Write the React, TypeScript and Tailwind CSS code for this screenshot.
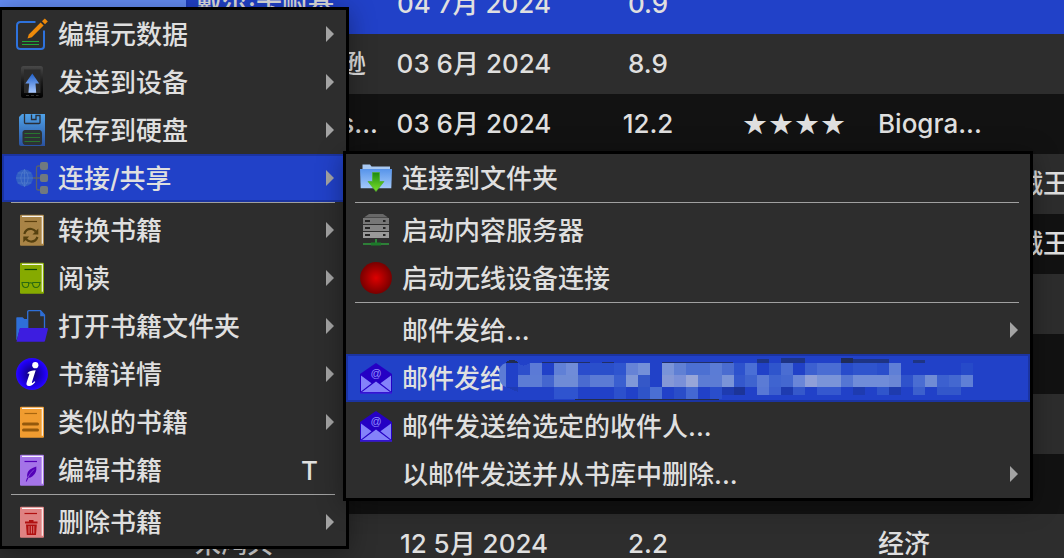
import React from "react";

type IconProps = { children: React.ReactNode };

const Icon = ({ children }: IconProps) => (
  <svg viewBox="0 0 32 32" className="size-8 shrink-0" aria-hidden="true">
    {children}
  </svg>
);

const EditIcon = () => (
  <Icon>
    <path d="M19.5 4H4.5Q1 4 1 7.500V27.500Q1 31 4.500 31H25Q28 31 28 28V12.500" fill="none" stroke="#2e72dc" strokeWidth="2" />
    <path d="M6 23.500H23M6 26.500H23" stroke="#1fa83a" strokeWidth="1" />
    <path d="M11.500 20.500L12.800 16.400L24.600 4.600L27.600 7.600L15.800 19.200Z" fill="#ee8a0a" />
    <path d="M26 3.200L28.800 0.400L31.800 3.400L29 6.200Z" fill="#ee8a0a" />
  </Icon>
);

const DeviceIcon = () => (
  <Icon>
    <defs>
      <linearGradient id="dev-body" x2="0" y2="1">
        <stop stopColor="#484848" />
        <stop offset="0.5" stopColor="#1a1a1a" />
        <stop offset="1" stopColor="#000" />
      </linearGradient>
      <linearGradient id="dev-arrow" x2="0" y2="1">
        <stop stopColor="#1f5fc8" />
        <stop offset="1" stopColor="#a8c8ff" />
      </linearGradient>
    </defs>
    <rect x="5" y="0" width="22" height="32" rx="2.500" fill="url(#dev-body)" />
    <rect x="8" y="3.500" width="16.500" height="23.500" fill="#2b2b2b" />
    <path d="M16.300 7.500L23.200 17.500H19.500L20.200 26.700H12.400L13.200 17.500H9.300Z" fill="url(#dev-arrow)" />
    <path d="M10 29.500H13M15 29.500H18M20 29.500H22.500" stroke="#444" strokeWidth="0.800" />
  </Icon>
);

const SaveIcon = () => (
  <Icon>
    <defs>
      <linearGradient id="disk" x2="0" y2="1">
        <stop stopColor="#4fa2e8" />
        <stop offset="1" stopColor="#2a52a0" />
      </linearGradient>
    </defs>
    <path d="M6 0H29V32H5Q3 32 3 30V3Z" fill="url(#disk)" />
    <path d="M8.500 0V8.500Q8.500 9.500 9.500 9.500H23Q24 9.500 24 8.500V1.500H20V5.500H15.500V0.500" fill="none" stroke="#2a2f38" strokeWidth="1.300" />
    <path d="M8.500 16H24Q26 17 26 19V29Q26 31 24 31H8.500Q6.500 30 6.500 28V18Q7 16.500 8.500 16Z" fill="#2d3234" />
    <path d="M8.500 19.500H24M8.500 23.500H24M8.500 27.500H24" stroke="#28752f" strokeWidth="1" />
  </Icon>
);

const ShareIcon = () => (
  <Icon>
    <path d="M17 16H25M25 4H22Q20.500 4 20.500 6V26Q20.500 28 22 28H25" fill="none" stroke="#59616c" strokeWidth="1.300" />
    <circle cx="8.500" cy="16" r="8.500" fill="#315fc4" />
    <path d="M0 16H17M1.500 11H15.500M1.500 21H15.500M8.500 7.500V24.500M8.500 7.500Q1 16 8.500 24.500M8.500 7.500Q16 16 8.500 24.500" fill="none" stroke="#5580cc" strokeWidth="0.600" />
    <rect x="24" y="0" width="8" height="8" rx="2" fill="#707980" />
    <rect x="24" y="12" width="8" height="8" rx="2" fill="#707980" />
    <rect x="24" y="24" width="8" height="8" rx="2" fill="#707980" />
  </Icon>
);

type BookProps = { fill: string; ink: string; children: React.ReactNode };

const Book = ({ fill, ink, children }: BookProps) => (
  <Icon>
    <rect x="4" y="0.800" width="24" height="31" rx="1" fill={fill} />
    <path d="M6 2.300H26.300V29.800" fill="none" stroke="#fff" strokeOpacity="0.900" strokeWidth="1.200" />
    <path d="M8.500 7.500H21" stroke={ink} strokeWidth="1.200" />
    {children}
  </Icon>
);

const ConvertIcon = () => (
  <Book fill="#a98446" ink="#5c400e">
    <path d="M8.300 20Q10 14.500 15.500 15Q18 15.300 19.800 17.500M21.500 23Q19.500 28 14.500 27.500Q12 27.200 10 25" fill="none" stroke="#55400f" strokeWidth="2.200" />
    <path d="M22.300 14.500V20.500H16.500ZM7.300 28.500V22.500H13.200Z" fill="#55400f" />
  </Book>
);

const ReadIcon = () => (
  <Book fill="#86aa00" ink="#0f4a05">
    <path d="M5.500 20.500H12.500Q13.300 25.500 9.700 25.500Q6.300 25.500 6 20.500M16.500 20.500H24Q23.500 25.500 20 25.500Q16.500 25.500 16.500 20.500M12.500 21.500Q14.500 20 16.500 21.500" fill="none" stroke="#2a6a10" strokeWidth="1.100" />
  </Book>
);

const SimilarIcon = () => (
  <Book fill="#f09c30" ink="#a8660f">
    <path d="M7.500 18H21.500M7.500 24H21.500" stroke="#93590c" strokeWidth="3" strokeLinecap="round" />
  </Book>
);

const FeatherIcon = () => (
  <Book fill="#a474e8" ink="#5400b8">
    <path d="M20.300 12.500Q21 19 16.500 22.300Q14 24 12.500 23.800L10.500 27.800L9.800 27.500L11.300 23Q10.500 18 14 15.500Q17 13.500 20.300 12.500Z" fill="#5400b8" />
    <path d="M11.500 24Q14 19 18 15.500" fill="none" stroke="#a474e8" strokeWidth="0.600" />
  </Book>
);

const DeleteIcon = () => (
  <Book fill="#df8282" ink="#b01010">
    <path d="M9 15.500H21.500V17.500H9ZM13 15.500V14H17.500V15.500" fill="#b01010" />
    <path d="M10 18.500H20.800L20 29H10.800Z" fill="#b01010" />
    <path d="M13 20V27.500M15.400 20V27.500M17.800 20V27.500" stroke="#df8282" strokeWidth="0.900" />
  </Book>
);

const OpenFolderIcon = () => (
  <Icon>
    <path d="M0.300 8Q0.300 7.300 1 7.300H6.500L8.500 9H11.500V18.500H4L0.800 30Q0.300 30 0.300 29Z" fill="#2e6fd8" />
    <path d="M11.700 18V2Q11.700 0.700 13 0.700H24.500L28.500 5V18" fill="none" stroke="#2e6fd8" strokeWidth="1.300" />
    <path d="M24.200 0.500V6.200H29Z" fill="#2e6fd8" />
    <path d="M5 18H31Q32.200 18 31.900 19.200L29 31Q28.700 31.800 28 31.800H0.500L3.500 19Q3.800 18 5 18Z" fill="#3d1de0" />
  </Icon>
);

const InfoIcon = () => (
  <Icon>
    <defs>
      <radialGradient id="info">
        <stop stopColor="#0c0068" />
        <stop offset="0.850" stopColor="#2000f4" />
        <stop offset="1" stopColor="#2a08ff" />
      </radialGradient>
    </defs>
    <circle cx="16" cy="16" r="16" fill="url(#info)" />
    <circle cx="19.300" cy="7.200" r="3.100" fill="#fff" />
    <path d="M11.500 15Q14 12.500 19.700 12.300L16 24Q15.600 25.700 16.800 24.800L18.500 23.200L19.300 24Q16 28.200 13 28Q9.500 27.800 10.800 24L13.500 15.800Q13.200 15.300 11.800 15.800Z" fill="#fff" />
  </Icon>
);

const DownloadFolderIcon = () => (
  <Icon>
    <defs>
      <linearGradient id="fold" x2="0" y2="1">
        <stop stopColor="#5794ea" />
        <stop offset="1" stopColor="#a3c9fa" />
      </linearGradient>
      <linearGradient id="down" x2="0" y2="1">
        <stop stopColor="#1c8a10" />
        <stop offset="1" stopColor="#7be02a" />
      </linearGradient>
    </defs>
    <path d="M2.500 2.500H10L11.500 4.500H30V9H2.500Z" fill="#a9c9f2" />
    <path d="M0 7H32L31.300 26.300H0.700Z" fill="url(#fold)" />
    <path d="M12.500 10.500H19.500V19.500H24L16 29.500L8 19.500H12.500Z" fill="url(#down)" stroke="#4fae2c" strokeWidth="0.700" />
  </Icon>
);

const ServerIcon = () => (
  <Icon>
    <path d="M9 0H23L28 3.500H4Z" fill="#686868" />
    <path d="M3 4H29V10H3Z" fill="#777" />
    <path d="M3 11H29V17H3Z" fill="#858585" />
    <path d="M3 18H29V24H3Z" fill="#999" />
    <path d="M5 7H10M5 14H10M5 21H10M23 7H25.500M23 14H25.500M23 21H25.500" stroke="#252525" strokeWidth="2" />
    <path d="M3 30H29M16 25V29" stroke="#2f9a3d" strokeWidth="1.600" />
    <path d="M11 28.500H21V31.500H11Z" fill="#1d7a2a" />
  </Icon>
);

const RecordIcon = () => (
  <Icon>
    <defs>
      <radialGradient id="rec">
        <stop stopColor="#de0000" />
        <stop offset="1" stopColor="#780000" />
      </radialGradient>
    </defs>
    <circle cx="16" cy="16" r="15.900" fill="url(#rec)" />
  </Icon>
);

const MailIcon = () => (
  <Icon>
    <path d="M16 1L32 12V31H0V12Z" fill="#2500c4" />
    <path d="M1 13.500L11.500 21.300L1 29.500ZM31 13.500L20.500 21.300L31 29.500ZM2 30L16 19.500L30 30Z" fill="#8482fa" />
    <path d="M0 31H32" stroke="#3a1ad8" strokeWidth="1.500" />
    <text x="16" y="14.500" textAnchor="middle" fontSize="11" fontWeight="400" fontFamily="Liberation Sans, sans-serif" fill="#8f8dff">@</text>
  </Icon>
);

const Arrow = () => (
  <svg viewBox="0 0 8 16" className="h-4 w-2 shrink-0" aria-hidden="true">
    <path d="M0 0L8 8L0 16Z" fill="#a3a3a3" />
  </svg>
);

const B = "#2141c8";

const upper = [
  B, "#2d4fcc", "#5b7ad6", B, "#6080d6", "#708cd8", "#2a4ccc", "#2a4fcb", "#2a4fcb", "#2f55cf",
  "#6683d6", "#7490d8", B, "#7a94d8", "#6080d4", "#4c70d2", "#4c70d2", "#5b7cd5", "#4a6cd0", "#2d52cd",
  "#4a6fd5", B, "#2f55cc", "#4a6dd2", B, "#3c60d0", "#4a6dd3", "#4a6dd3", "#284ccb", "#2f54cd",
  "#2f54cd", "#2a4ecb", "#5f7fd6", B, B, B, B, B, "#264ac9",
];
const middle = [
  B, "#5c7cd5", "#5c7cd5", "#4466cf", "#6f8cd6", "#6f8cd6", "#4a6bd0", "#5b7bd4", "#5b7bd4", "#3a5fd0",
  "#8098d8", "#3558c8", B, "#8598d6", "#7a90d8", "#98a6d8", "#5c7cd4", "#5c7cd4", "#7a94d8", "#3458cd",
  "#3f64cf", "#5b7bd5", "#3f64d0", "#4468d0", "#6a86d8", "#8f9fd8", "#7a94d8", "#7a94d8", "#5576d3", "#708cd8",
  "#708cd8", "#708cd8", "#6a86d5", "#2f52cb", "#4a6dd2", "#708cd5", "#3c60cf", "#4468d0", "#5f7fd6",
];
const lower = [
  B, B, B, B, "#2f54cf", "#2f54cf", B, B, B, "#2c50cc",
  B, "#2f54c8", "#4a6fd3", B, "#2a4dc8", "#4468d2", B, "#2a4ecb", "#1e3bb0", "#1c3498",
  B, "#5878d5", "#3c5fce", "#1e3bb0", "#3558cb", B, "#3558cf", "#3558cf", B, "#1e3bb0",
  B, "#3055cb", "#1e3bae", B, "#3c60cd", B, "#3357ca", "#3357ca", B,
];

/* Pixelated cover over the recipient's address */
const Mosaic = () => (
  <svg viewBox="0 0 474 44" className="absolute top-0 left-[151px] h-11 w-[474px]" shapeRendering="crispEdges" aria-hidden="true">
    <path d="M7 7Q0 8 0 19Q0 29 7 31Z" fill="#5c7cd5" shapeRendering="auto" />
    {[upper, middle, lower].map((row, r) =>
      row.map((color, c) => (
        <rect key={`${r}-${c}`} x={7 + c * 12 - (c > 19 ? 1 : 0)} y={7 + r * 12} width="12" height={r === 2 && c > 17 ? 8 : 12} fill={color} />
      )),
    )}
    <path d="M19 7L31 7Q24 12 19 7Z" fill={B} />
    <path d="M7 7Q8 4 13 4Q18 4 19 7Z" fill="#202c50" />
    <path d="M43 6H91V7H43ZM103 6H115V7H103ZM163 6H234V7H163Z" fill="#202e66" />
    <path d="M258 3H270V7H258ZM282 2H306V7H282ZM354 3H390V7H354ZM414 4H426V7H414Z" fill="#1e3484" />
    <path d="M342 2H354V7H342Z" fill="#202c58" />
    <path d="M76 43H220V44H76Z" fill="#232c4c" />
    <path d="M7 31L19 36V31Z" fill="#1f3cb4" />
  </svg>
);

type ItemProps = {
  icon?: React.ReactNode;
  label: string;
  shortcut?: string;
  submenu?: boolean;
  active?: boolean;
  children?: React.ReactNode;
};

const Item = ({ icon, label, shortcut, submenu, active, children }: ItemProps) => (
  <li role="none">
    <button
      type="button"
      role="menuitem"
      aria-haspopup={submenu ? "menu" : undefined}
      className={
        "relative flex h-12 w-full items-center gap-2.5 border-2 pr-2.5 pl-3 text-left " +
        (active ? "border-[#1b34a2] bg-[#2141c8]" : "border-transparent")
      }
    >
      {icon ?? <span className="size-8 shrink-0" />}
      <span className="grow pt-0.5 whitespace-nowrap">{label}</span>
      {shortcut && <kbd className="mr-4 pt-0.5 font-[inherit]">{shortcut}</kbd>}
      {submenu && <Arrow />}
      {children}
    </button>
  </li>
);

const Separator = () => <li role="separator" className="mr-[11px] ml-[9px] h-1 border-t border-[#a0a0a0]" />;

const ContextMenu = () => (
  <ul role="menu" className="absolute top-[7px] -left-px w-[350px] border-3 border-black bg-[#2d2d2d] shadow-[0_4px_24px_rgba(0,0,0,0.35)]">
    <Item icon={<EditIcon />} label="编辑元数据" submenu />
    <Item icon={<DeviceIcon />} label="发送到设备" submenu />
    <Item icon={<SaveIcon />} label="保存到硬盘" submenu />
    <Item icon={<ShareIcon />} label="连接/共享" submenu active />
    <Separator />
    <Item icon={<ConvertIcon />} label="转换书籍" submenu />
    <Item icon={<ReadIcon />} label="阅读" submenu />
    <Item icon={<OpenFolderIcon />} label="打开书籍文件夹" submenu />
    <Item icon={<InfoIcon />} label="书籍详情" submenu />
    <Item icon={<SimilarIcon />} label="类似的书籍" submenu />
    <Item icon={<FeatherIcon />} label="编辑书籍" shortcut="T" />
    <Separator />
    <Item icon={<DeleteIcon />} label="删除书籍" submenu />
  </ul>
);

const ShareMenu = () => (
  <ul role="menu" className="absolute top-[151px] left-[343px] w-[690px] border-3 border-black bg-[#2d2d2d] shadow-[0_4px_24px_rgba(0,0,0,0.35)]">
    <Item icon={<DownloadFolderIcon />} label="连接到文件夹" />
    <Separator />
    <Item icon={<ServerIcon />} label="启动内容服务器" />
    <Item icon={<RecordIcon />} label="启动无线设备连接" />
    <Separator />
    <Item label="邮件发给..." submenu />
    <Item icon={<MailIcon />} label="邮件发给" active>
      <Mosaic />
    </Item>
    <Item icon={<MailIcon />} label="邮件发送给选定的收件人..." />
    <Item label="以邮件发送并从书库中删除..." submenu />
  </ul>
);

type Row = {
  author?: React.ReactNode;
  date?: string;
  size?: string;
  rating?: string;
  tag?: string;
  more?: string;
};

const rows: Row[] = [
  { author: <span className="block pl-2 text-left">戴尔·卡耐基</span>, date: "04 7月 2024", size: "0.9" },
  { author: <span className="block pr-3 text-right">逊</span>, date: "03 6月 2024", size: "8.9" },
  { author: <span className="block text-right">s...</span>, date: "03 6月 2024", size: "12.2", rating: "★★★★", tag: "Biogra..." },
  { more: "贼王" },
  { more: "贼王" },
  {},
  {},
  {},
  {},
  { author: <span className="block pl-2 text-left">宋鸿兵</span>, date: "12 5月 2024", size: "2.2", tag: "经济" },
];

const BookTable = () => (
  <table className="-mt-[26px] w-full table-fixed border-collapse whitespace-nowrap">
    <colgroup>
      <col className="w-[187px]" />
      <col className="w-[191px]" />
      <col className="w-[192px]" />
      <col className="w-[156px]" />
      <col className="w-[136px]" />
      <col className="w-[155px]" />
      <col />
    </colgroup>
    <tbody>
      {rows.map((row, i) => (
        <tr key={i} className={"h-[60px] " + (i === 0 ? "bg-[#2141c8]" : i % 2 ? "bg-[#2d2d2d]" : "bg-[#121212]")}>
          <td className={i === 0 ? "border-r-2 border-[#1f3fc0] bg-[#648cf4]" : ""} />
          <td className="p-0">{row.author}</td>
          <td className="p-0 text-center">{row.date}</td>
          <td className="p-0 text-center">{row.size}</td>
          <td className="p-0 text-center font-['DejaVu_Sans'] text-[29px] leading-8">{row.rating}</td>
          <td className="p-0 pl-4">{row.tag}</td>
          <td className="p-0">{row.more}</td>
        </tr>
      ))}
    </tbody>
  </table>
);

export default function App() {
  return (
    <main
      lang="zh-CN"
      className="relative flex h-screen flex-col overflow-hidden bg-[#121212] font-['Inter','Noto_Sans_CJK_SC',sans-serif] text-[26px] leading-8 font-medium text-[#dfdfdf]"
    >
      <BookTable />
      <ContextMenu />
      <ShareMenu />
    </main>
  );
}
